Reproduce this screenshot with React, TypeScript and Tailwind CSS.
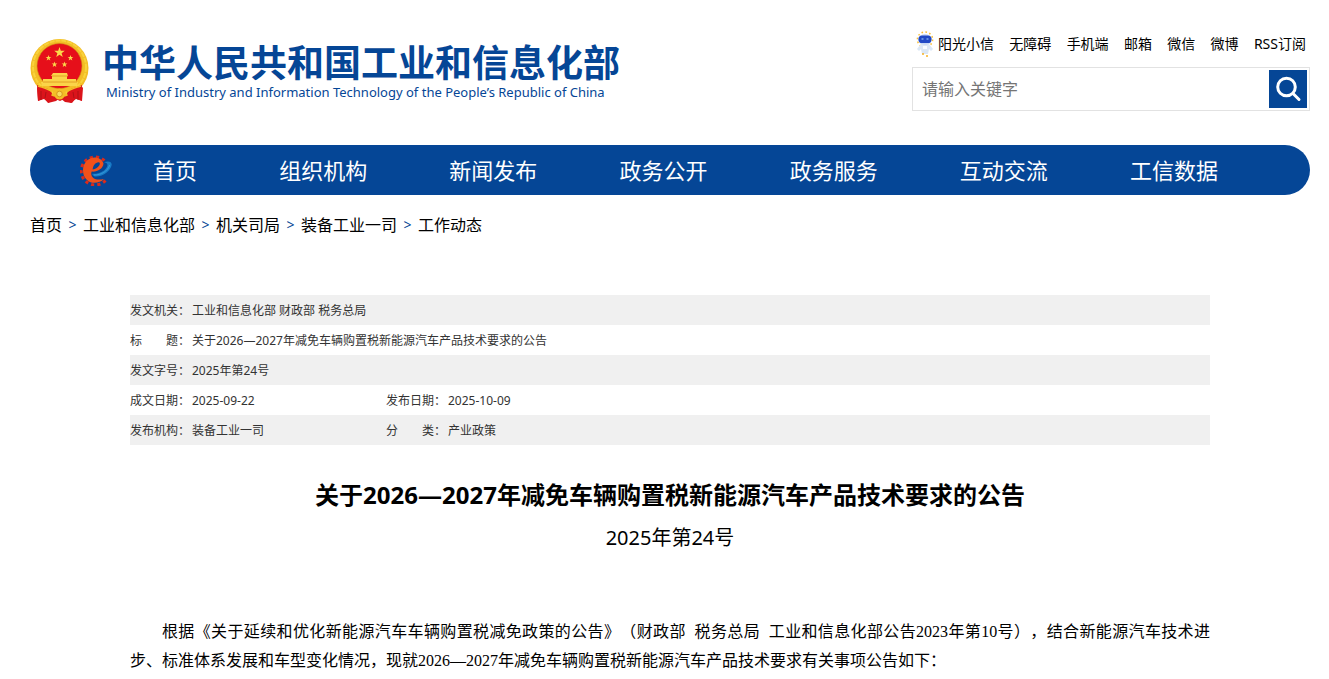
import React from 'react'

const topLinks = ['无障碍', '手机端', '邮箱', '微信', '微博', 'RSS订阅']
const navItems = ['首页', '组织机构', '新闻发布', '政务公开', '政务服务', '互动交流', '工信数据']
const crumbs = ['首页', '工业和信息化部', '机关司局', '装备工业一司', '工作动态']

const STAR = 'M0-5 1.2-1.6 4.8-1.6 1.9.6 3 4.1 0 2-3 4.1-1.9.6-4.8-1.6-1.2-1.6Z'

function Emblem() {
  return (
    <svg className="h-[65px] w-[60px] shrink-0" viewBox="0 0 60 65" aria-hidden="true">
      <path d="M11 44 7 49 8 62 14 59 18 64 26 62 30 59 35 63 42 64 46 59 52 62 53 49 49 44Z" fill="#d9141b" />
      <circle cx="29.5" cy="29" r="29" fill="#f3bd26" />
      <circle cx="29.5" cy="28" r="26.5" fill="none" stroke="#f9d33c" strokeWidth="2" strokeDasharray="5 1" />
      <circle cx="29.5" cy="27" r="22.5" fill="#e60f1a" stroke="#cf8a15" strokeWidth="0.6" />
      <g fill="#fbd84a">
        <path d={STAR} transform="translate(29.5 13.5) scale(1.1)" />
        <path d={STAR} transform="translate(18.5 19) scale(.6)" />
        <path d={STAR} transform="translate(40.5 19) scale(.6)" />
        <path d={STAR} transform="translate(24.5 25.5) scale(.6)" />
        <path d={STAR} transform="translate(34.5 25.5) scale(.6)" />
      </g>
      <path d="M23 34h14l1 3h-1v3h9v3h2l-1 4H12l-1-4h2v-3h9v-3h-1Z" fill="#fbd449" />
      <path d="M22 37h16M13 43h34" stroke="#dd931c" strokeWidth="0.8" />
      <path d="M7 46c6 3 11 2 15 8l-3 10-5-4-6 2Z" fill="#db141b" />
      <path d="M52 46c-6 3-11 2-15 8l3 10 6-4 6 2Z" fill="#db141b" />
      <path d="M17 56 30 62 42 56 40 63 30 59 19 63Z" fill="#db141b" />
      <circle cx="29.5" cy="55" r="5.5" fill="#f3bd26" />
      <circle cx="29.5" cy="55" r="2.8" fill="#f9dc5c" stroke="#cf8a15" strokeWidth="0.8" />
      <path d="M8 47c6 2 11 3 14 6M51 47c-6 2-11 3-14 6" fill="none" stroke="#f3bd26" strokeWidth="1.4" />
      <path d="M11 52v9M16 53l-1 6M48 52v9M43 53l1 6" stroke="#9d0e13" strokeWidth="0.7" />
    </svg>
  )
}

function Mascot() {
  return (
    <svg className="h-[26px] w-[18px] shrink-0" viewBox="0 0 18 26" aria-hidden="true">
      <circle cx="9" cy="8.5" r="7.6" fill="none" stroke="#f8bd35" strokeWidth="1.5" strokeDasharray="1.6 2.4" />
      <path d="M5 13 1 18 3 20 5 18 6 23h6l1-5 2 2 2-2-4-5Z" fill="#dbe7f5" />
      <ellipse cx="9" cy="8.5" rx="6.8" ry="5.4" fill="#c9d9f3" />
      <rect x="2.5" y="4.5" width="13" height="7.5" rx="3.6" fill="#2149c5" />
      <path d="M5.5 8h2M10.5 8h2" stroke="#a8d8ff" strokeWidth="1" />
      <path d="M7 15h4v3H7Z" fill="#f8fbff" />
      <path d="M6 23h2M10 25h2" stroke="#f8b325" strokeWidth="1.6" />
    </svg>
  )
}

function GearLogo() {
  return (
    <svg className="size-8 shrink-0" viewBox="0 0 32 32" aria-hidden="true">
      <path d="M24.5 6.5A14 14 0 1 0 25.5 26.5" fill="none" stroke="#dc2a1b" strokeWidth="3" strokeDasharray="3.2 3" />
      <path
        d="M23.5 9.5C22.5 6 19 3.6 14.8 3.6 8 3.6 3 9.4 3 16.4s5 12.4 11.4 12.4c4 0 7-1.3 9.6-3.8-5 1.2-9.8.8-12-2.6-1-1.7-.9-3.4-.3-4.8 5.6.6 11.4-3 11.8-8.1Z"
        fill="#f2511a"
      />
      <path d="M12.6 15.6c.2-4 3-7.3 5.8-7.4 3.4.2.6 5.9-5.8 7.4Z" fill="#054696" />
      <path d="M12.4 18.6C19 19.6 25.5 15.5 27 9" fill="none" stroke="#054696" strokeWidth="1.2" />
      <path
        d="M12.2 19.8c7 .6 13.6-3.1 15.2-7.8.6-2-.6-3.6-3.4-3.8 4-1.6 8-.8 7.7 2.6-1.2 6.1-8.2 12.2-16.9 11.7-1.3-.3-2.4-1.3-2.6-2.7Z"
        fill="#187bc6"
      />
      <path d="M14 21c7 .2 14-3.8 15.6-10" fill="none" stroke="#3d9edb" strokeWidth="0.8" />
    </svg>
  )
}

function Header() {
  return (
    <header className="flex items-start justify-between pt-[30px]">
      <a href="#" className="mt-[9px] flex items-center gap-3 text-[#054696]">
        <Emblem />
        <span className="flex flex-col">
          <span className="text-[37px] leading-[40px] font-bold whitespace-nowrap">中华人民共和国工业和信息化部</span>
          <span className="pl-1 text-[13px] leading-[18px] whitespace-nowrap">
            Ministry of Industry and Information Technology of the People’s Republic of China
          </span>
        </span>
      </a>
      <div className="w-[398px]">
        <ul className="flex items-center justify-between pr-1 pl-1 text-sm leading-[28px]">
          <li>
            <a href="#" className="flex items-center gap-1">
              <Mascot />
              阳光小信
            </a>
          </li>
          {topLinks.map((item) => (
            <li key={item}>
              <a href="#">{item}</a>
            </li>
          ))}
        </ul>
        <form className="mt-[9px] flex h-11 items-center border border-[#e2e2e2] pr-[2px]">
          <input
            type="text"
            aria-label="请输入关键字"
            placeholder="请输入关键字"
            className="min-w-0 flex-1 px-[9px] text-base outline-none placeholder:text-[#757575]"
          />
          <button type="button" aria-label="搜索" className="flex size-[38px] items-center justify-center bg-[#054696]">
            <svg className="size-7" viewBox="0 0 28 28" fill="none" stroke="#fff" strokeWidth="3" strokeLinecap="round">
              <circle cx="12.5" cy="12" r="8.8" />
              <path d="M19 18.5 25 24.5" />
            </svg>
          </button>
        </form>
      </div>
    </header>
  )
}

function Nav() {
  return (
    <nav className="mt-[34px] flex h-[50px] items-center rounded-full bg-[#054696] pr-[92px] pl-[50px] text-white">
      <GearLogo />
      <ul className="ml-[41px] flex flex-1 justify-between text-[22px]">
        {navItems.map((item) => (
          <li key={item}>
            <a href="#">{item}</a>
          </li>
        ))}
      </ul>
    </nav>
  )
}

function Breadcrumb() {
  return (
    <div className="mt-[18px] flex items-center text-base">
      {crumbs.map((item, i) => (
        <React.Fragment key={item}>
          {i > 0 && <span className="w-[21px] text-center text-sm text-[#054696]">&gt;</span>}
          <a href="#">{item}</a>
        </React.Fragment>
      ))}
    </div>
  )
}

function InfoTable() {
  return (
    <table className="w-full table-fixed text-left text-xs text-[#333] [&_td]:pt-[2px] [&_th]:pt-[2px] [&_th]:font-normal [&_th]:whitespace-nowrap [&_tr]:h-[30px] [&_tr:nth-child(odd)]:bg-[#f0f0f0]">
      <colgroup>
        <col className="w-[62px]" />
        <col className="w-[194px]" />
        <col className="w-[62px]" />
        <col />
      </colgroup>
      <tbody>
        <tr>
          <th scope="row">发文机关：</th>
          <td colSpan={3}>工业和信息化部 财政部 税务总局</td>
        </tr>
        <tr>
          <th scope="row">标　　题：</th>
          <td colSpan={3}>关于2026—2027年减免车辆购置税新能源汽车产品技术要求的公告</td>
        </tr>
        <tr>
          <th scope="row">发文字号：</th>
          <td colSpan={3}>2025年第24号</td>
        </tr>
        <tr>
          <th scope="row">成文日期：</th>
          <td>2025-09-22</td>
          <th scope="row">发布日期：</th>
          <td>2025-10-09</td>
        </tr>
        <tr>
          <th scope="row">发布机构：</th>
          <td>装备工业一司</td>
          <th scope="row">分　　类：</th>
          <td>产业政策</td>
        </tr>
      </tbody>
    </table>
  )
}

export default function App() {
  return (
    <div
      lang="zh-CN"
      className="bg-white pr-[19px] pl-[30px] font-['Noto_Sans','Noto_Sans_CJK_SC',sans-serif] text-black"
    >
      <Header />
      <Nav />
      <Breadcrumb />
      <main className="mt-[58px] px-[100px]">
        <InfoTable />
        <h1 className="mt-8 text-center text-2xl leading-9 font-bold">
          关于2026—2027年减免车辆购置税新能源汽车产品技术要求的公告
        </h1>
        <p className="mt-[10px] text-center text-xl leading-[30px]">2025年第24号</p>
        <p className="mt-16 indent-8 text-justify font-['Liberation_Serif','Noto_Sans_CJK_SC',serif] text-base leading-[29px] [text-spacing-trim:space-all]">
          根据《关于延续和优化新能源汽车车辆购置税减免政策的公告》（财政部&nbsp; 税务总局&nbsp; 工业和信息化部公告2023年第10号），结合新能源汽车技术进步、标准体系发展和车型变化情况，现就2026—2027年减免车辆购置税新能源汽车产品技术要求有关事项公告如下：
        </p>
      </main>
    </div>
  )
}
